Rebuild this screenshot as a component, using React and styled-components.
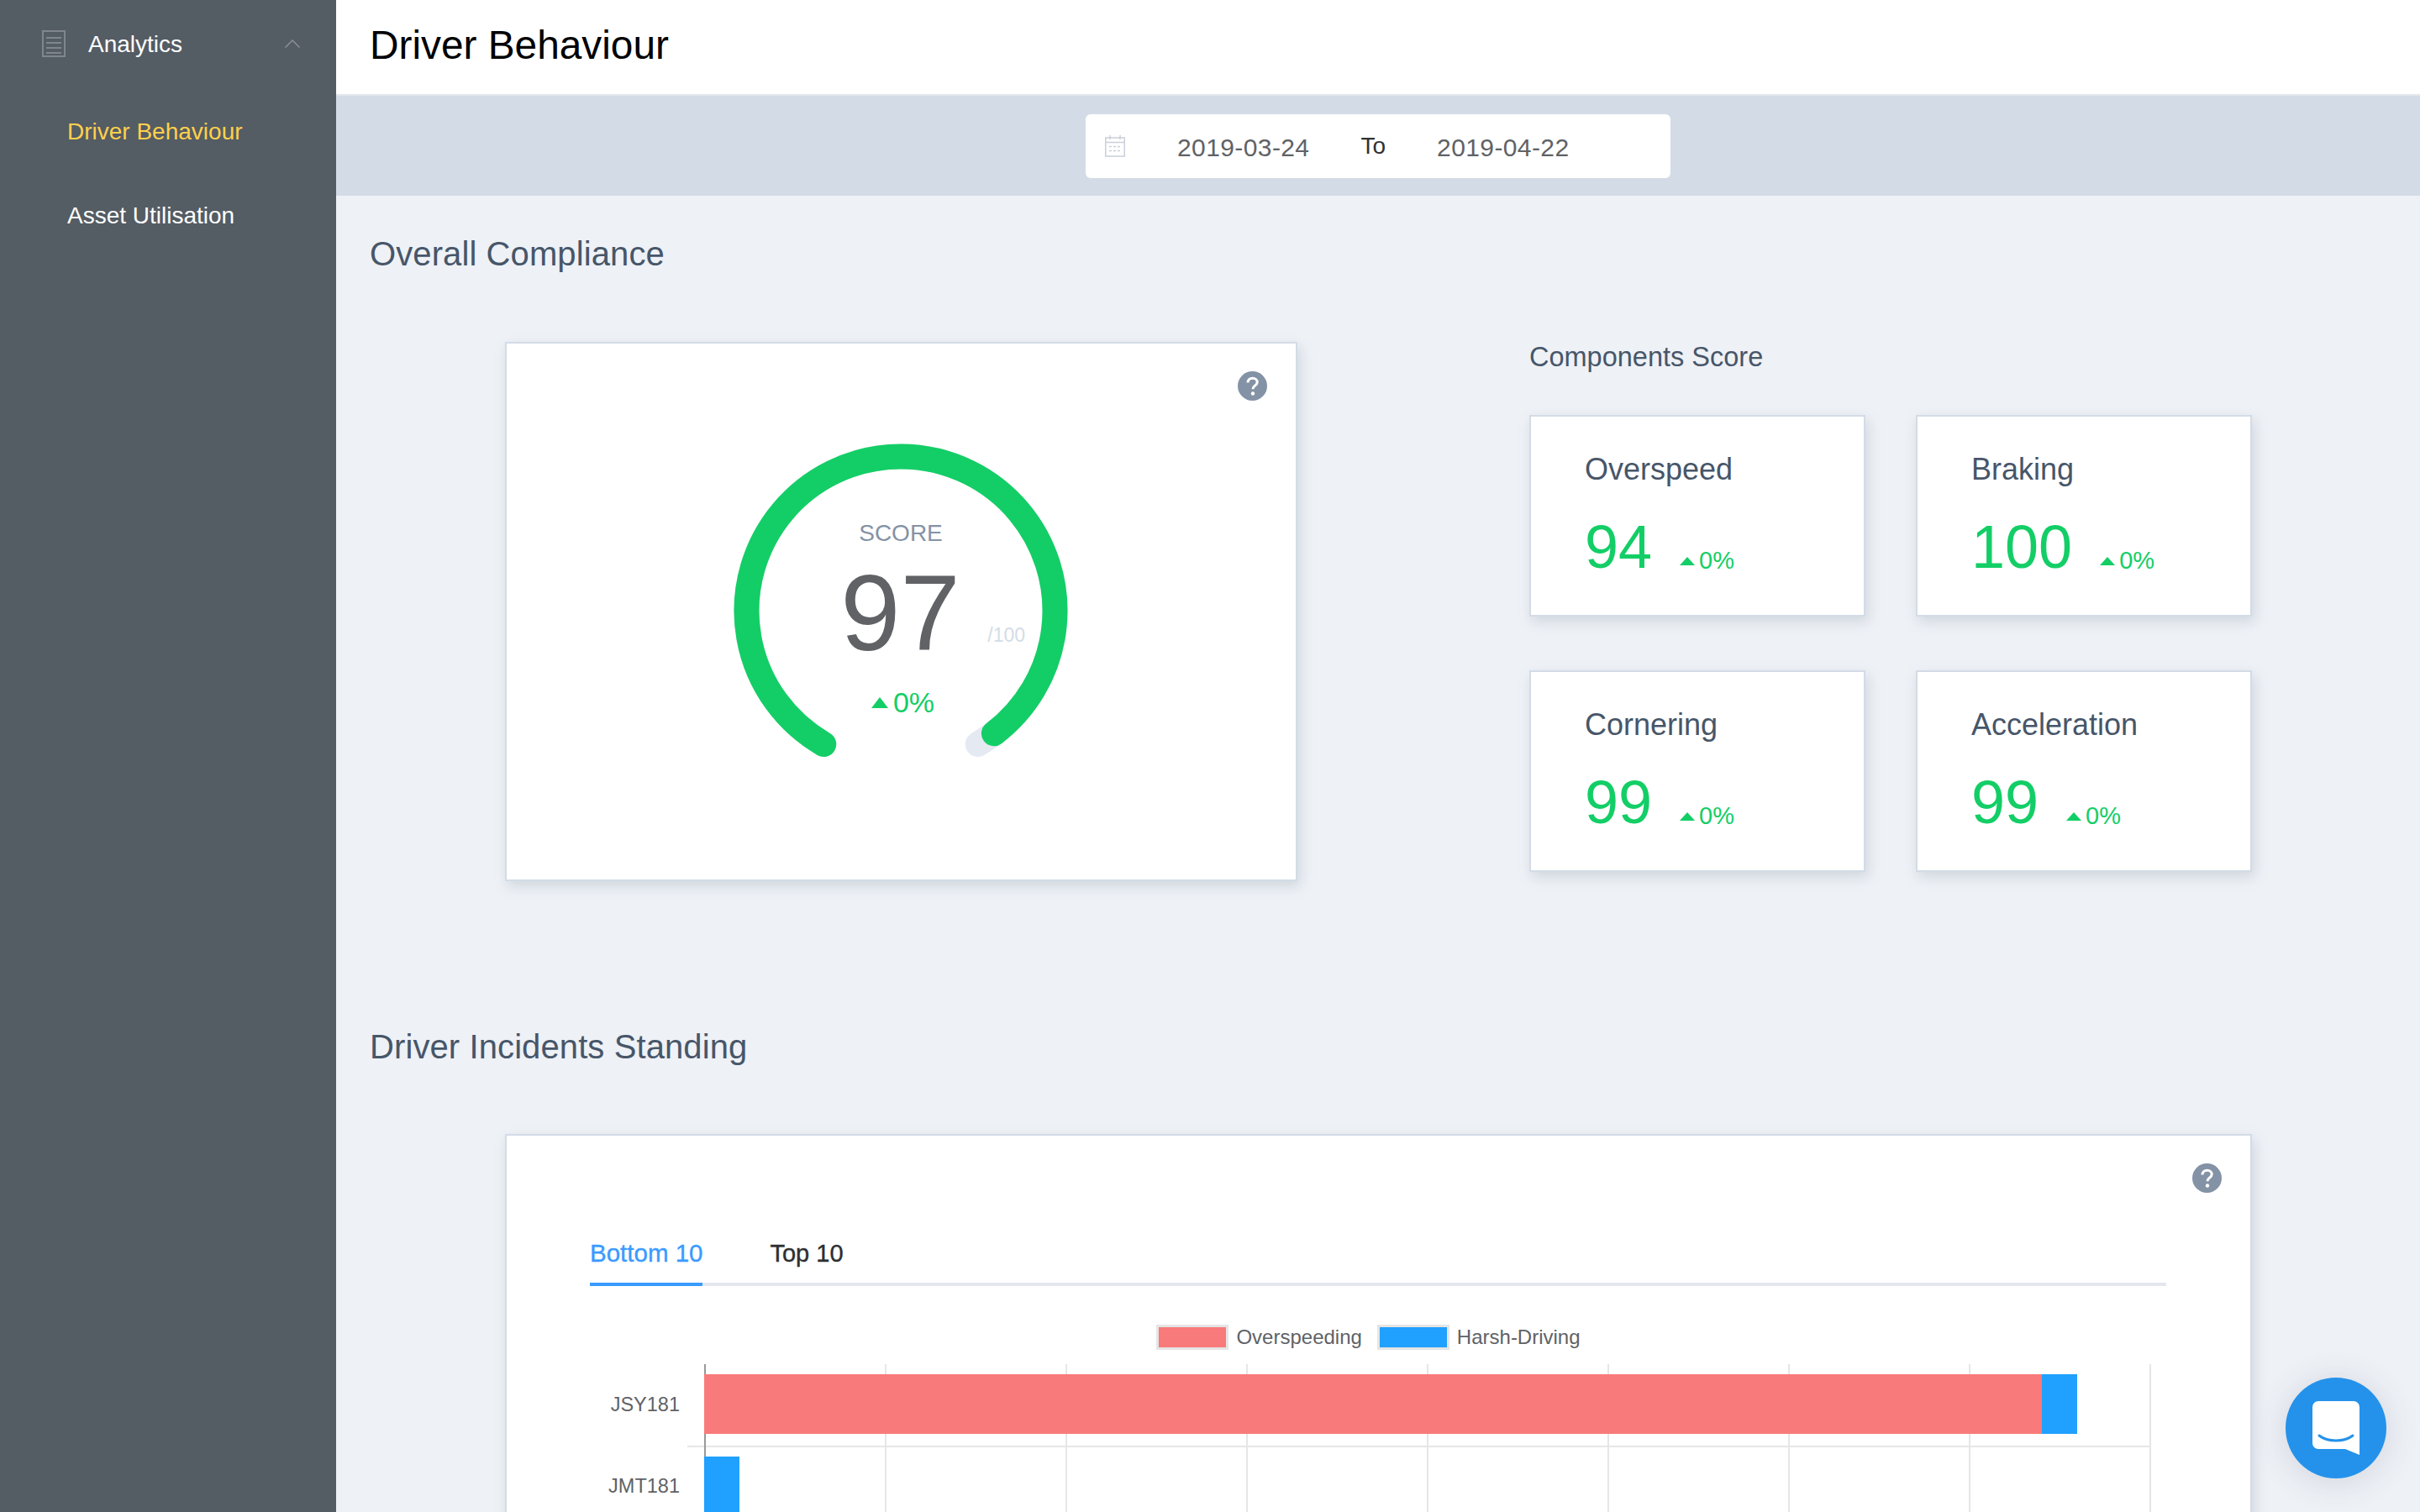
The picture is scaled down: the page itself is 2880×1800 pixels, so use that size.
import React from 'react';
import styled, { createGlobalStyle } from 'styled-components';

const GlobalStyle = createGlobalStyle`
    html, body {
        margin: 0;
        padding: 0;
        height: 100%;
        overflow: hidden;
    }
    * {
        box-sizing: border-box;
    }
    body {
        font-family: "Liberation Sans", Arial, sans-serif;
        background: #eef1f6;
    }
`;

const Page = styled.div`
    display: grid;
    grid-template-columns: 400px 1fr;
    height: 100vh;
    overflow: hidden;
`;

const Sidebar = styled.aside`
    background: #545c64;
    color: #fff;
    font-size: 28px;
`;

const MenuHead = styled.div`
    display: flex;
    align-items: center;
    height: 104px;
    padding: 0 43px 0 50px;
    margin-bottom: 3px;
`;

const MenuTitle = styled.span`
    flex: 1;
    margin: 2px 0 0 27px;
`;

const MenuItem = styled.div`
    height: 100px;
    line-height: 100px;
    padding-left: 80px;
    color: ${(p) => (p.$active ? '#ffd04b' : '#fff')};
`;

const Main = styled.main`
    min-width: 0;
    overflow: hidden;
`;

const Header = styled.header`
    height: 114px;
    background: #fff;
    border-bottom: 2px solid #e4e7ed;
    padding-left: 40px;
`;

const PageTitle = styled.h1`
    margin: 0;
    font-size: 47.800px;
    font-weight: 400;
    line-height: 108px;
    color: #000;
`;

const DateBar = styled.div`
    display: flex;
    justify-content: center;
    align-items: center;
    height: 119px;
    background: #d3dce6;
`;

const DatePicker = styled.div`
    display: flex;
    align-items: center;
    width: 696px;
    height: 76px;
    padding-left: 23px;
    background: #fff;
    border-radius: 6px;
    font-size: 28px;
    color: #606266;
`;

const DateText = styled.span`
    font-size: 30px;
    letter-spacing: 0.400px;
    margin-top: 5px;
    margin-left: ${(p) => p.$offset}px;
`;

const DateSep = styled.span`
    color: #303133;
    margin-left: 61px;
`;

const Content = styled.div`
    padding: 0 200px 0 40px;
`;

const SectionTitle = styled.h2`
    margin: 0;
    font-size: 40px;
    font-weight: 400;
    line-height: 60px;
    letter-spacing: 0.100px;
    color: #475669;
    padding-top: ${(p) => p.$top}px;
`;

const ScoreRow = styled.section`
    display: grid;
    grid-template-columns: 943px 860px;
    column-gap: 276px;
    margin: 75px 0 0 161px;
`;

const Card = styled.div`
    position: relative;
    background: #fff;
    border: 2px solid #d3dce6;
    box-shadow: 3px 6px 14px rgba(132, 146, 166, 0.28);
`;

const GaugeCard = styled(Card)`
    display: flex;
    justify-content: center;
    height: 642px;
    padding: 118px 2px 0 0;
`;

const HelpButton = styled.div`
    position: absolute;
    top: ${(p) => p.$top}px;
    right: ${(p) => p.$right}px;
    width: 35px;
    height: 35px;
`;

const Gauge = styled.div`
    position: relative;
    width: 400px;
    height: 400px;
`;

const GaugeText = styled.div`
    position: absolute;
    inset: 0;
    display: flex;
    flex-direction: column;
    align-items: center;
    padding-top: 92px;
`;

const GaugeLabel = styled.div`
    font-size: 28px;
    line-height: 32px;
    margin-left: 1px;
    color: #8492a6;
`;

const GaugeValue = styled.div`
    position: relative;
    font-size: 128px;
    line-height: 128px;
    margin-top: 15px;
    color: #606266;
`;

const GaugeMax = styled.span`
    position: absolute;
    left: 175px;
    bottom: 25px;
    font-size: 23px;
    line-height: 26px;
    color: #d3dce6;
`;

const DeltaWrap = styled.div`
    display: flex;
    align-items: center;
    gap: ${(p) => p.$gap}px;
    margin: ${(p) => p.$margin};
    font-size: ${(p) => p.$size}px;
    line-height: 1;
    color: #13ce66;
`;

const Triangle = styled.i`
    display: block;
    width: 0;
    height: 0;
    border-left: ${(p) => p.$w}px solid transparent;
    border-right: ${(p) => p.$w}px solid transparent;
    border-bottom: ${(p) => p.$h}px solid #13ce66;
`;

const ComponentsLabel = styled.div`
    font-size: 32.500px;
    line-height: 36px;
    color: #475669;
`;

const ComponentGrid = styled.div`
    display: grid;
    grid-template-columns: 400px 400px;
    grid-auto-rows: 240px;
    gap: 64px 60px;
    margin-top: 51px;
`;

const ScoreCard = styled(Card)`
    padding: 42px 0 0 64px;
`;

const ScoreName = styled.div`
    font-size: 36px;
    line-height: 42px;
    color: #475669;
`;

const ScoreLine = styled.div`
    display: flex;
    align-items: flex-end;
    margin-top: 35px;
    height: 72px;
`;

const ScoreValue = styled.span`
    font-size: 72px;
    line-height: 72px;
    color: #13ce66;
`;

const StandingCard = styled(Card)`
    margin: 74px 0 0 161px;
    width: 2079px;
    height: 800px;
    padding-top: 113px;
`;

const TabBar = styled.div`
    display: flex;
    gap: 80px;
    height: 66px;
    margin: 0 100px 0 99px;
    border-bottom: 4px solid #e4e7ed;
`;

const Tab = styled.div`
    height: 66px;
    font-size: ${(p) => (p.$active ? 29.5 : 29)}px;
    line-height: 54px;
    -webkit-text-stroke: 0.4px currentColor;
    color: ${(p) => (p.$active ? '#3a9bff' : '#2d2f33')};
    border-bottom: 4px solid ${(p) => (p.$active ? '#3a9bff' : 'transparent')};
`;

const Legend = styled.div`
    display: flex;
    justify-content: center;
    align-items: center;
    height: 30px;
    margin: 46px 24px 0 0;
    font-size: 24px;
    color: #606266;
`;

const Swatch = styled.span`
    width: 86px;
    height: 30px;
    margin: 0 9px 0 ${(p) => p.$gap}px;
    background: ${(p) => p.$color};
    border: 3px solid #e5e5e5;
`;

const ChartSvg = styled.svg`
    display: block;
    margin-top: 17px;
`;

const ChartLabel = styled.text`
    font-size: 23.500px;
    fill: #606266;
    text-anchor: end;
`;

const ChatButton = styled.div`
    position: fixed;
    left: 2720px;
    top: 1640px;
    display: flex;
    align-items: center;
    justify-content: center;
    width: 120px;
    height: 120px;
    border-radius: 50%;
    background: #2492eb;
    box-shadow: 0 4px 40px rgba(60, 70, 90, 0.16);
`;

const HelpIcon = () => (
    <svg width="35" height="35" viewBox="0 0 35 35">
        <circle cx="17.500" cy="17.500" r="17.500" fill="#8492a6" />
        <path d="M12 13.500c0-3.200 2.400-5.300 5.700-5.300 3.200 0 5.500 2 5.500 4.700 0 2.200-1.300 3.300-2.800 4.400-1.600 1.100-2.400 1.900-2.400 3.900" fill="none" stroke="#fff" strokeWidth="3" />
        <circle cx="18" cy="26.500" r="2.200" fill="#fff" />
    </svg>
);

const Delta = ({ size, gap, margin, w, h }) => (
    <DeltaWrap $size={size} $gap={gap} $margin={margin}>
        <Triangle $w={w} $h={h} />
        0%
    </DeltaWrap>
);

const components = [
    { name: 'Overspeed', value: 94 },
    { name: 'Braking', value: 100 },
    { name: 'Cornering', value: 99 },
    { name: 'Acceleration', value: 99 },
];

const gridLines = [236, 451, 666, 881, 1096, 1311, 1526, 1741, 1956];

const Chart = () => (
    <ChartSvg width="2075" height="400" viewBox="0 0 2075 400">
        {gridLines.map((x) => (
            <line key={x} x1={x} x2={x} y1="0" y2="400" stroke="#e6e6e6" strokeWidth="2" />
        ))}
        <line x1="215" x2="1956" y1="98" y2="98" stroke="#e6e6e6" strokeWidth="2" />
        <line x1="236" x2="236" y1="0" y2="400" stroke="#999" strokeWidth="2" />
        <rect x="235" y="12" width="1592" height="71" fill="#f97a7a" />
        <rect x="1827" y="12" width="42" height="71" fill="#20a0ff" />
        <rect x="235" y="110" width="42" height="71" fill="#20a0ff" />
        <ChartLabel x="206" y="56">JSY181</ChartLabel>
        <ChartLabel x="206" y="153">JMT181</ChartLabel>
    </ChartSvg>
);

const App = () => (
    <Page>
        <GlobalStyle />
        <Sidebar>
            <MenuHead>
                <svg width="28" height="32" viewBox="0 0 28 32" fill="none" stroke="#7f868e" strokeWidth="2">
                    <rect x="1" y="1" width="26" height="30" />
                    <path d="M5 9h18M5 15h18M5 21h18M5 27h18" />
                </svg>
                <MenuTitle>Analytics</MenuTitle>
                <svg width="18" height="10" viewBox="0 0 18 10" fill="none" stroke="#8b9096" strokeWidth="1.5">
                    <path d="M0.500 9.500L9 1l8.500 8.500" />
                </svg>
            </MenuHead>
            <MenuItem $active>Driver Behaviour</MenuItem>
            <MenuItem>Asset Utilisation</MenuItem>
        </Sidebar>
        <Main>
            <Header>
                <PageTitle>Driver Behaviour</PageTitle>
            </Header>
            <DateBar>
                <DatePicker>
                    <svg width="24" height="26" viewBox="0 0 24 26" fill="none" stroke="#c9d0da" strokeWidth="1.5">
                        <rect x="0.750" y="3" width="22.500" height="22" />
                        <path d="M1 8.500h22M6 0v5M18 0v5" />
                        <path d="M5 13.500h14M5 18.500h14" strokeDasharray="3 2" />
                    </svg>
                    <DateText $offset={62}>2019-03-24</DateText>
                    <DateSep>To</DateSep>
                    <DateText $offset={61}>2019-04-22</DateText>
                </DatePicker>
            </DateBar>
            <Content>
                <SectionTitle $top={39}>Overall Compliance</SectionTitle>
                <ScoreRow>
                    <GaugeCard>
                        <HelpButton $top={33} $right={34}>
                            <HelpIcon />
                        </HelpButton>
                        <Gauge>
                            <svg width="400" height="400" viewBox="0 0 400 400" fill="none" strokeWidth="30" strokeLinecap="round">
                                <path d="M108.250 358.900A183.500 183.500 0 1 1 291.750 358.900" stroke="#e5e9f2" />
                                <path d="M108.250 358.900A183.500 183.500 0 1 1 291.750 358.900" stroke="#13ce66" pathLength="100" strokeDasharray="97.600 100" />
                            </svg>
                            <GaugeText>
                                <GaugeLabel>SCORE</GaugeLabel>
                                <GaugeValue>
                                    97
                                    <GaugeMax>/100</GaugeMax>
                                </GaugeValue>
                                <Delta size={34} gap={6} margin="25px 0 0 6px" w={10} h={13} />
                            </GaugeText>
                        </Gauge>
                    </GaugeCard>
                    <div>
                        <ComponentsLabel>Components Score</ComponentsLabel>
                        <ComponentGrid>
                            {components.map((c) => (
                                <ScoreCard key={c.name}>
                                    <ScoreName>{c.name}</ScoreName>
                                    <ScoreLine>
                                        <ScoreValue>{c.value}</ScoreValue>
                                        <Delta size={29} gap={5} margin="0 0 5px 33px" w={9} h={10} />
                                    </ScoreLine>
                                </ScoreCard>
                            ))}
                        </ComponentGrid>
                    </div>
                </ScoreRow>
                <SectionTitle $top={167}>Driver Incidents Standing</SectionTitle>
                <StandingCard>
                    <HelpButton $top={33} $right={34}>
                        <HelpIcon />
                    </HelpButton>
                    <TabBar>
                        <Tab $active>Bottom 10</Tab>
                        <Tab>Top 10</Tab>
                    </TabBar>
                    <Legend>
                        <Swatch $color="#f97a7a" $gap={0} />
                        Overspeeding
                        <Swatch $color="#20a0ff" $gap={18} />
                        Harsh-Driving
                    </Legend>
                    <Chart />
                </StandingCard>
            </Content>
        </Main>
        <ChatButton>
            <svg width="56" height="64" viewBox="0 0 56 64">
                <path d="M7 0h42a7 7 0 0 1 7 7v57l-17-7H7a7 7 0 0 1-7-7V7a7 7 0 0 1 7-7z" fill="#fff" />
                <path d="M8 41c10 8 30 8 40 0" fill="none" stroke="#2492eb" strokeWidth="3" strokeLinecap="round" />
            </svg>
        </ChatButton>
    </Page>
);

export default App;
